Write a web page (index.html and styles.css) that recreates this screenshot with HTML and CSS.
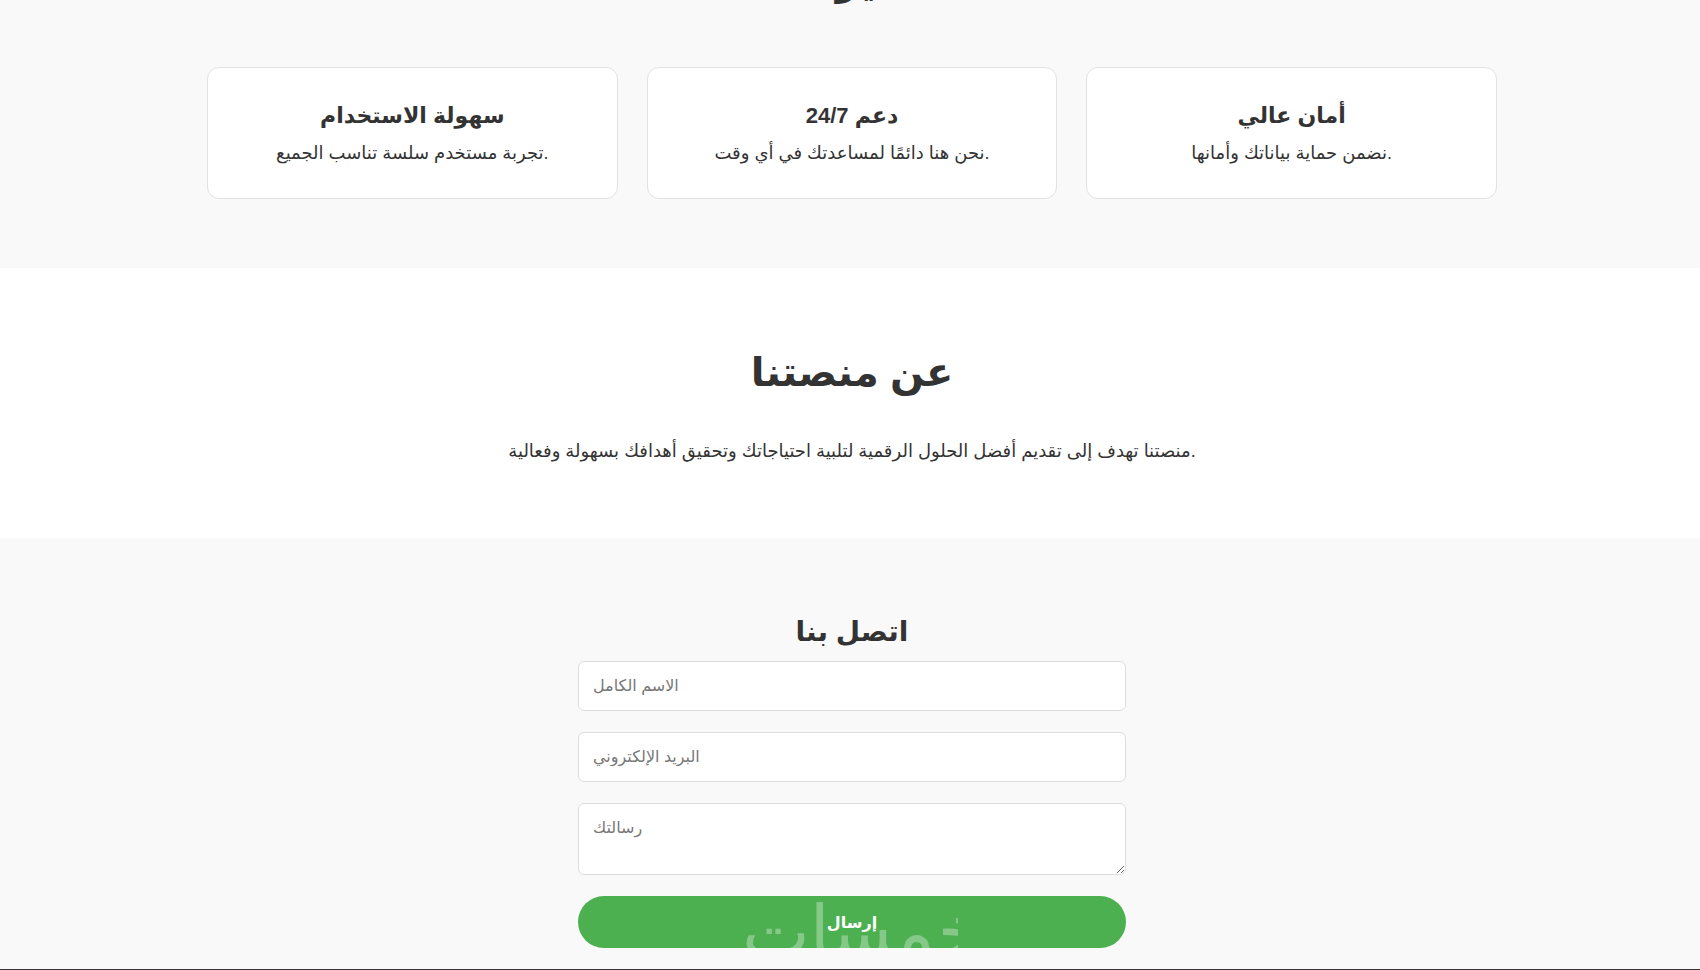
FILE: index.html
```html
<!DOCTYPE html>
<html lang="ar">
<head>
    <meta charset="UTF-8">
    <meta name="viewport" content="width=device-width, initial-scale=1.0">
    <title>منصتنا</title>
    <link rel="stylesheet" href="styles.css">
</head>
<body>
    <section class="features">
        <h2>مميزاتنا</h2>
        <div class="feature-grid">
            <div class="feature-card">
                <h3>سهولة الاستخدام</h3>
                <p>تجربة مستخدم سلسة تناسب الجميع.</p>
            </div>
            <div class="feature-card">
                <h3>دعم 24/7</h3>
                <p>نحن هنا دائمًا لمساعدتك في أي وقت.</p>
            </div>
            <div class="feature-card">
                <h3>أمان عالي</h3>
                <p>نضمن حماية بياناتك وأمانها.</p>
            </div>
        </div>
    </section>

    <section class="about">
        <h2>عن منصتنا</h2>
        <p>منصتنا تهدف إلى تقديم أفضل الحلول الرقمية لتلبية احتياجاتك وتحقيق أهدافك بسهولة وفعالية.</p>
    </section>

    <section class="contact">
        <h2>اتصل بنا</h2>
        <form class="contact-form" onsubmit="return false;">
            <input type="text" placeholder="الاسم الكامل">
            <input type="email" placeholder="البريد الإلكتروني">
            <textarea placeholder="رسالتك"></textarea>
            <button type="submit">إرسال</button>
        </form>
    </section>

    <footer class="footer"></footer>

    <div class="watermark">خمسات</div>
</body>
</html>
```

FILE: styles.css
```css
body {
    font-family: 'Liberation Sans', Arial, 'DejaVu Sans', sans-serif;
    color: #333;
    margin: 0;
    padding: 0;
    background-color: #fff;
}
section {
    text-align: center;
    padding: 0 18px 0 22px;
}
h2 {
    margin: 0;
    font-size: 40px;
    line-height: 48px;
    color: #333;
}
.features {
    background-color: #f9f9f9;
    margin-top: -124px;
    padding-top: 80px;
    padding-bottom: 69px;
}
.features h2 {
    margin-bottom: 63px;
}
.feature-grid {
    display: grid;
    grid-template-columns: repeat(3, 1fr);
    gap: 29px;
    max-width: 1290px;
    margin: 0 auto;
}
.feature-card {
    background-color: white;
    border: 1px solid #e2e2e2;
    border-radius: 12px;
    padding: 35px 20px 30px;
}
.feature-card h3 {
    margin: 0 0 10px;
    font-size: 22px;
    line-height: 26px;
}
.feature-card p {
    margin: 0;
    font-size: 18px;
    line-height: 29px;
}
.about {
    background-color: white;
    padding-top: 80px;
    padding-bottom: 72px;
}
.about p {
    margin: 41px 0 0;
    font-size: 18px;
    line-height: 29px;
}
.contact {
    background-color: #f9f9f9;
    padding-top: 77px;
    padding-bottom: 21px;
}
.contact h2 {
    font-size: 28px;
    line-height: 34px;
    margin-bottom: 12px;
}
.contact-form {
    display: flex;
    flex-direction: column;
    gap: 21px;
    max-width: 548px;
    margin: 0 auto;
}
.contact-form input, .contact-form textarea {
    box-sizing: border-box;
    width: 100%;
    padding: 14px;
    border: 1px solid #ddd;
    border-radius: 6px;
    background-color: white;
    font-family: inherit;
    font-size: 16px;
    color: #333;
}
.contact-form input {
    height: 50px;
}
.contact-form textarea {
    height: 72px;
    resize: vertical;
}
.contact-form ::placeholder {
    color: #777;
}
.contact-form button {
    height: 52px;
    background-color: #4caf50;
    color: white;
    border: none;
    border-radius: 26px;
    font-family: inherit;
    font-size: 16px;
    font-weight: bold;
    cursor: pointer;
}
.contact-form button:hover {
    background-color: #43a047;
}
.footer {
    background-color: #333;
    height: 40px;
}
.watermark {
    position: fixed;
    left: 742px;
    top: 890px;
    width: 216px;
    height: 60px;
    overflow: hidden;
    font-size: 72px;
    line-height: 84px;
    text-align: center;
    color: rgba(255, 255, 255, 0.32);
    pointer-events: none;
}
```
